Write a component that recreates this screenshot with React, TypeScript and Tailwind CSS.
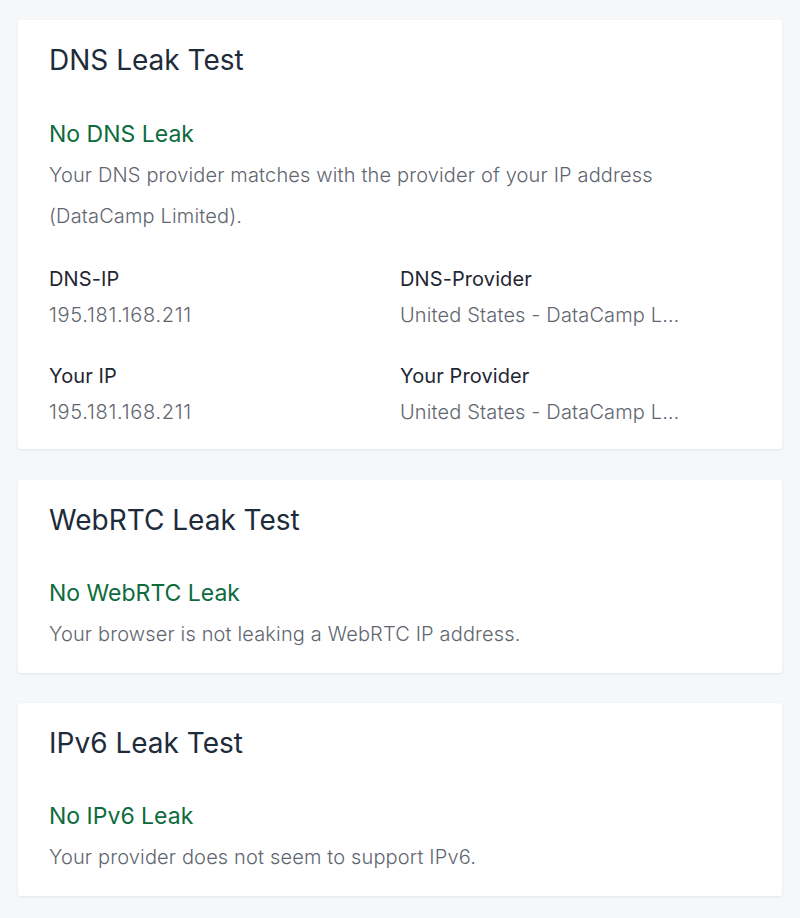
import React from 'react'

const rows = [
  [
    { label: 'DNS-IP', value: '195.181.168.211', ip: true },
    { label: 'DNS-Provider', value: 'United States - DataCamp Limited', ip: false },
  ],
  [
    { label: 'Your IP', value: '195.181.168.211', ip: true },
    { label: 'Your Provider', value: 'United States - DataCamp Limited', ip: false },
  ],
]

function Card({ title, status, children }: { title: string; status: string; children: React.ReactNode }) {
  return (
    <section className="bg-white rounded-[3px] shadow-[0_1px_3px_rgba(0,0,0,0.08)] px-[31px] pt-5 pb-[18px]">
      <h2 className="text-[28px] leading-[40px] text-[#1d2b3a] font-normal">{title}</h2>
      <p className="mt-[37px] text-[23px] leading-[32px] text-[#0d6b3c]">{status}</p>
      {children}
    </section>
  )
}

export default function App() {
  return (
    <div className="min-h-[918px] bg-[#f5f7f9] px-[18px] pt-5 pb-5 flex flex-col" style={{ fontFamily: 'Inter, "Noto Sans", sans-serif' }}>
      <section className="bg-white rounded-[3px] shadow-[0_1px_3px_rgba(0,0,0,0.08)] px-[31px] pt-5 pb-[22px]">
        <h2 className="text-[28px] leading-[40px] text-[#1d2b3a]">DNS Leak Test</h2>
        <p className="mt-[38px] text-[23px] leading-[32px] text-[#0d6b3c]">No DNS Leak</p>
        <p className="mt-[5px] text-[20px] leading-[41px] font-light tracking-[0.15px] text-[#5f6670] max-w-[640px]">
          Your DNS provider matches with the provider of your IP address (DataCamp Limited).
        </p>
        <div className="mt-[27px] flex flex-col gap-[31px]">
          {rows.map((row, i) => (
            <div key={i} className="grid grid-cols-2">
              {row.map((c) => (
                <div key={c.label} className="flex flex-col gap-[6px]">
                  <span className="text-[20px] leading-[30px] tracking-[0.1px] text-[#1f2733]">{c.label}</span>
                  <span
                    className={
                      c.ip
                        ? 'text-[20px] leading-[30px] font-light tracking-[0.7px] text-[#5f6670]'
                        : 'text-[20px] leading-[30px] font-light tracking-[0.15px] text-[#5f6670] truncate w-[284px]'
                    }
                  >
                    {c.value}
                  </span>
                </div>
              ))}
            </div>
          ))}
        </div>
      </section>

      <div className="mt-[31px]">
        <Card title="WebRTC Leak Test" status="No WebRTC Leak">
          <p className="mt-[5px] text-[20px] leading-[41px] font-light tracking-[0.15px] text-[#5f6670]">
            Your browser is not leaking a WebRTC IP address.
          </p>
        </Card>
      </div>

      <div className="mt-[30px]">
        <Card title="IPv6 Leak Test" status="No IPv6 Leak">
          <p className="mt-[5px] text-[20px] leading-[41px] font-light tracking-[0.15px] text-[#5f6670]">
            Your provider does not seem to support IPv6.
          </p>
        </Card>
      </div>
    </div>
  )
}
